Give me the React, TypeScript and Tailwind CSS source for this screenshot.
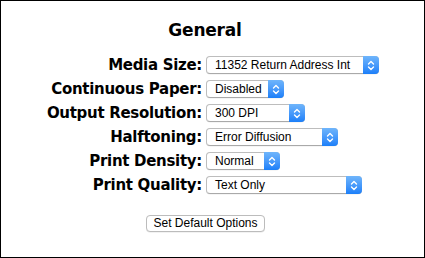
import React from 'react';

const rows: { label: string; value: string; width: number }[] = [
  { label: 'Media Size:', value: '11352 Return Address Int', width: 173 },
  { label: 'Continuous Paper:', value: 'Disabled', width: 78 },
  { label: 'Output Resolution:', value: '300 DPI', width: 99 },
  { label: 'Halftoning:', value: 'Error Diffusion', width: 132 },
  { label: 'Print Density:', value: 'Normal', width: 74 },
  { label: 'Print Quality:', value: 'Text Only', width: 156 },
];

const PopUp = ({ value, width }: { value: string; width: number }) => (
  <div
    className="flex h-[18px] items-stretch rounded-[4px] border border-[#bdbdbd] border-b-[#a9a9a9] bg-white shadow-[0_0.5px_0.5px_rgba(0,0,0,0.08)]"
    style={{ width }}
  >
    <span className="flex-1 truncate pl-[8px] text-[12px] leading-[16px] text-black [font-family:'Liberation_Sans',Arial,sans-serif]">
      {value}
    </span>
    <span className="-my-px -mr-px flex w-[16px] items-center justify-center rounded-r-[4px] bg-gradient-to-b from-[#6fb5fb] to-[#1a7ff9]">
      <svg width="8" height="11" viewBox="0 0 8 11" fill="none" stroke="white" strokeWidth="1.4" strokeLinecap="round" strokeLinejoin="round">
        <path d="M1.5 4 L4 1.5 L6.5 4" />
        <path d="M1.5 7 L4 9.5 L6.5 7" />
      </svg>
    </span>
  </div>
);

export default function App() {
  return (
    <div className="h-[258px] w-[425px] border border-black bg-white [font-family:'DejaVu_Sans',sans-serif]">
      <div className="w-[408px] pt-[19px] text-center text-[17px] font-bold leading-[20px] tracking-[-0.2px] text-black">
        General
      </div>
      <div className="mt-[16px] flex flex-col gap-[6px]">
        {rows.map((r) => (
          <div key={r.label} className="flex h-[18px] items-center">
            <span className="w-[201px] whitespace-nowrap text-right text-[15px] font-bold leading-[18px] tracking-[-0.3px] text-black">
              {r.label}
            </span>
            <span className="ml-[4px]">
              <PopUp value={r.value} width={r.width} />
            </span>
          </div>
        ))}
      </div>
      <div className="mt-[21px] flex w-[409px] justify-center">
        <button className="h-[17px] rounded-[4px] border border-[#bcbcbc] bg-white px-[6px] text-[12px] leading-[15px] text-black shadow-[0_0.5px_0.5px_rgba(0,0,0,0.1)] [font-family:'Liberation_Sans',Arial,sans-serif]">
          Set Default Options
        </button>
      </div>
    </div>
  );
}
